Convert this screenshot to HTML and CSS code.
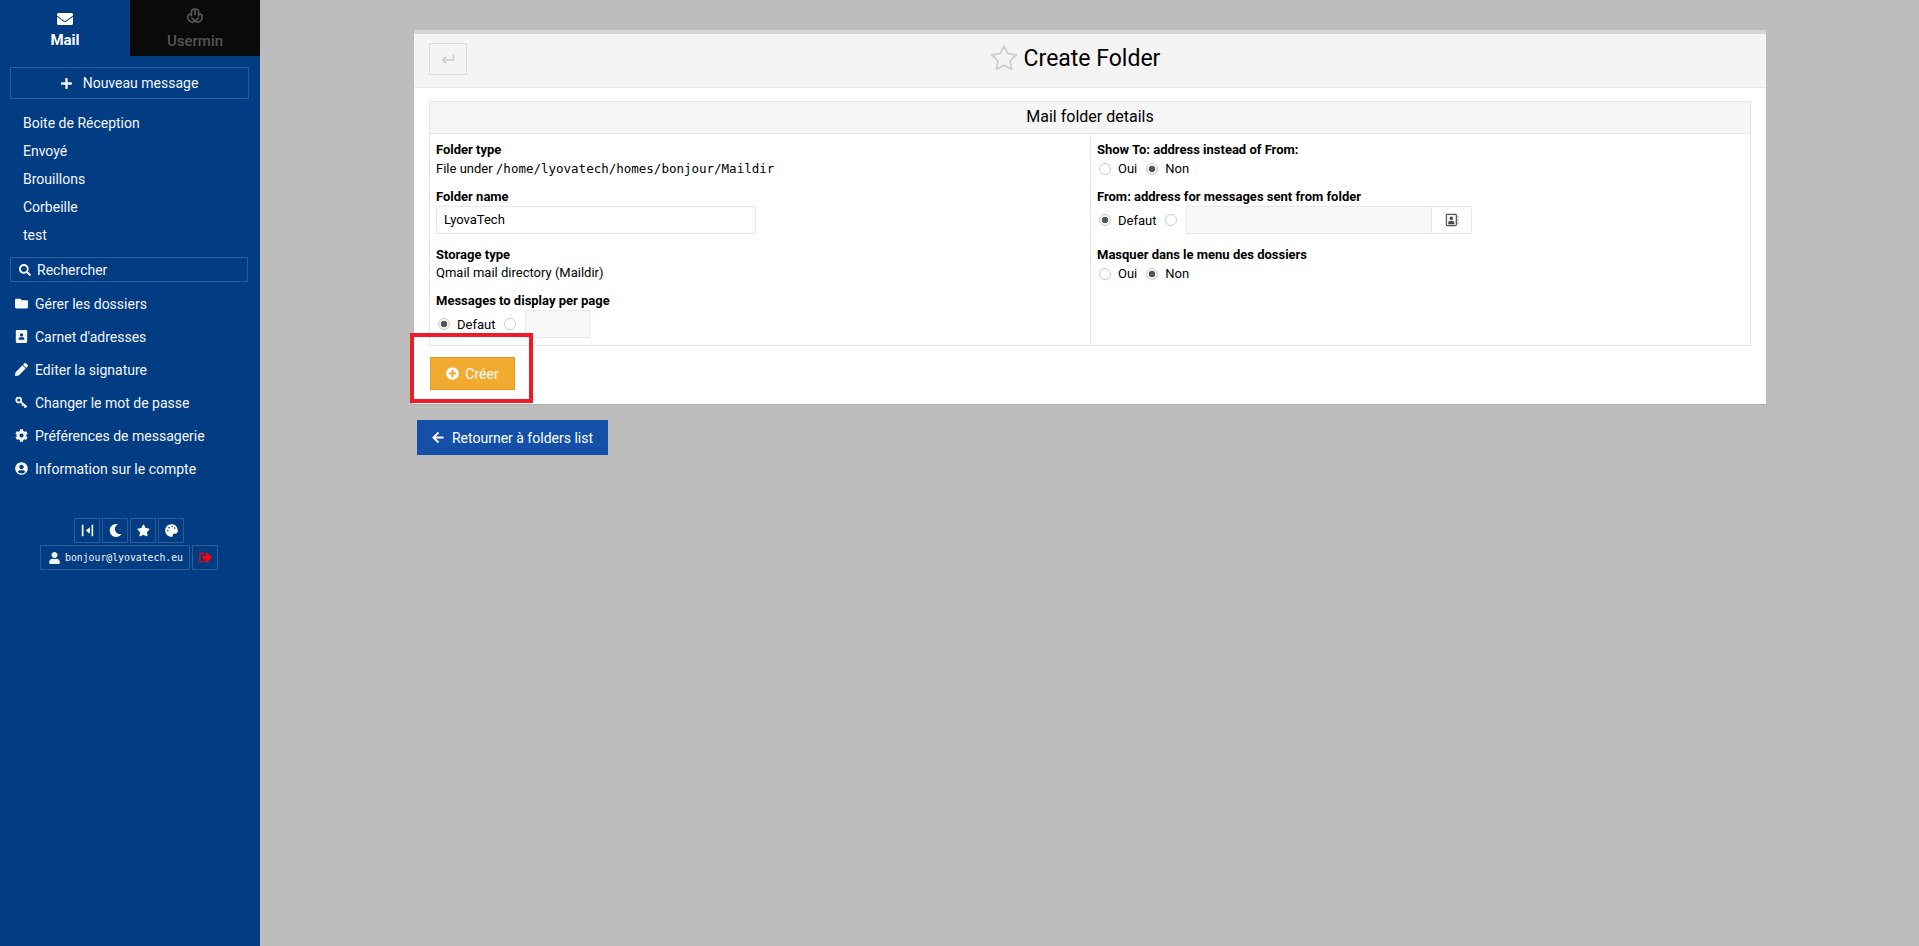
FILE: index.html
```html
<!DOCTYPE html>
<html lang="fr">
<head>
<meta charset="utf-8">
<title>Create Folder</title>
<link rel="stylesheet" href="styles.css">
</head>
<body>
<svg class="sprite" xmlns="http://www.w3.org/2000/svg">
  <symbol id="i-envelope" viewBox="0 0 512 512"><path d="M502.3 190.8c3.9-3.1 9.7-.2 9.7 4.7V400c0 26.5-21.5 48-48 48H48c-26.5 0-48-21.5-48-48V195.6c0-5 5.7-7.8 9.7-4.7 22.4 17.4 52.1 39.5 154.1 113.6 21.1 15.4 56.7 47.8 92.2 47.6 35.7.3 72-32.8 92.3-47.6 102-74.1 131.6-96.3 154-113.7zM256 320c23.2.4 56.6-29.2 73.4-41.4 132.7-96.3 142.8-104.7 173.4-128.7 5.8-4.5 9.2-11.5 9.2-18.9v-19c0-26.5-21.5-48-48-48H48C21.5 64 0 85.5 0 112v19c0 7.4 3.4 14.3 9.2 18.9 30.6 23.9 40.7 32.4 173.4 128.7 16.8 12.2 50.2 41.8 73.4 41.4z"/></symbol>
  <symbol id="i-plus" viewBox="0 0 448 512"><path d="M416 208H272V64c0-17.67-14.33-32-32-32h-32c-17.67 0-32 14.33-32 32v144H32c-17.67 0-32 14.33-32 32v32c0 17.67 14.33 32 32 32h144v144c0 17.67 14.33 32 32 32h32c17.67 0 32-14.33 32-32V304h144c17.67 0 32-14.33 32-32v-32c0-17.67-14.33-32-32-32z"/></symbol>
  <symbol id="i-search" viewBox="0 0 512 512"><path d="M505 442.7L405.3 343c-4.5-4.5-10.6-7-17-7H372c27.6-35.3 44-79.7 44-128C416 93.1 322.9 0 208 0S0 93.1 0 208s93.1 208 208 208c48.3 0 92.7-16.4 128-44v16.3c0 6.4 2.5 12.5 7 17l99.7 99.7c9.4 9.4 24.6 9.4 33.9 0l28.3-28.3c9.4-9.4 9.4-24.6.1-34zM208 336c-70.7 0-128-57.2-128-128 0-70.7 57.2-128 128-128 70.7 0 128 57.2 128 128 0 70.7-57.2 128-128 128z"/></symbol>
  <symbol id="i-folder" viewBox="0 0 512 512"><path d="M464 128H272l-64-64H48C21.49 64 0 85.49 0 112v288c0 26.51 21.49 48 48 48h416c26.51 0 48-21.49 48-48V176c0-26.51-21.49-48-48-48z"/></symbol>
  <symbol id="i-book" viewBox="0 0 448 512"><path fill-rule="evenodd" d="M48 0h352c26.500 0 48 21.500 48 48v416c0 26.500-21.500 48-48 48H48c-26.500 0-48-21.500-48-48V48C0 21.500 21.500 0 48 0zM224 128a64 64 0 1 0 0 128a64 64 0 1 0 0-128zM128 384h192c9 0 16-7 16-16v-20c0-34-34-60-72-60h-80c-38 0-72 26-72 60v20c0 9 7 16 16 16z"/></symbol>
  <symbol id="i-book-line" viewBox="0 0 16 16"><rect x="1.500" y="1.500" width="11.500" height="13" rx="1" fill="#f2f2f2" stroke="#5c5148" stroke-width="1.300"/><path fill="#4a4a4a" d="M7.200 4a2 2 0 1 1 0 4a2 2 0 0 1 0-4zM3.700 12.800v-1.800c0-1.400 1.500-2.200 3.500-2.200s3.500.8 3.500 2.200v1.800z"/><path fill="#8ab4ec" d="M14 3h1.500v2.500H14zM14 6.800h1.500v2.500H14zM14 10.500h1.500V13H14z"/></symbol>
  <symbol id="i-pencil" viewBox="0 0 512 512"><path d="M497.9 142.1l-46.1 46.1c-4.7 4.7-12.3 4.7-17 0l-111-111c-4.7-4.7-4.7-12.3 0-17l46.1-46.1c18.7-18.7 49.1-18.7 67.9 0l60.1 60.1c18.800 18.700 18.800 49.100 0 67.900zM284.200 99.800L21.600 362.400.4 483.900c-2.900 16.400 11.400 30.600 27.800 27.800l121.500-21.300 262.600-262.600c4.700-4.700 4.700-12.300 0-17l-111-111c-4.800-4.700-12.400-4.700-17.100 0z"/></symbol>
  <symbol id="i-key" viewBox="0 0 16 16"><g fill="none" stroke="currentColor" stroke-width="2.200"><circle cx="4.600" cy="5" r="3"/><path d="M7 7.200l7.500 6.300M10.300 10l-1.600 2M13 12.300l-1.500 2"/></g></symbol>
  <symbol id="i-cog" viewBox="0 0 512 512"><path d="M487.400 315.700l-42.600-24.600c4.300-23.200 4.300-47 0-70.200l42.600-24.600c4.900-2.800 7.100-8.600 5.500-14-11.100-35.600-30-67.800-54.700-94.600-3.800-4.100-10-5.100-14.800-2.300L380.800 110c-17.900-15.400-38.500-27.300-60.800-35.100V25.800c0-5.600-3.900-10.500-9.400-11.700-36.700-8.200-74.300-7.800-109.200 0-5.500 1.200-9.400 6.100-9.400 11.700V75c-22.200 7.900-42.800 19.800-60.800 35.100L88.700 85.500c-4.900-2.800-11-1.900-14.800 2.300-24.700 26.700-43.600 58.900-54.700 94.600-1.700 5.400.6 11.200 5.500 14L67.300 221c-4.300 23.200-4.300 47 0 70.200l-42.600 24.600c-4.900 2.800-7.100 8.600-5.500 14 11.100 35.600 30 67.800 54.700 94.600 3.800 4.100 10 5.100 14.800 2.300l42.600-24.600c17.900 15.400 38.500 27.300 60.800 35.100v49.200c0 5.600 3.900 10.500 9.400 11.700 36.700 8.200 74.300 7.800 109.200 0 5.500-1.200 9.400-6.100 9.400-11.700v-49.200c22.200-7.900 42.800-19.800 60.800-35.100l42.600 24.600c4.900 2.800 11 1.900 14.800-2.300 24.700-26.700 43.600-58.900 54.700-94.600 1.500-5.500-.7-11.300-5.600-14.100zM256 336c-44.100 0-80-35.900-80-80s35.900-80 80-80 80 35.900 80 80-35.900 80-80 80z"/></symbol>
  <symbol id="i-usercircle" viewBox="0 0 496 512"><path d="M248 8C111 8 0 119 0 256s111 248 248 248 248-111 248-248S385 8 248 8zm0 96c48.600 0 88 39.400 88 88s-39.400 88-88 88-88-39.400-88-88 39.400-88 88-88zm0 344c-58.700 0-111.300-26.600-146.500-68.200 18.800-35.400 55.600-59.800 98.500-59.800 2.400 0 4.800.4 7.100 1.100 13 4.200 26.600 6.900 40.900 6.900 14.300 0 28-2.700 40.900-6.900 2.300-.7 4.700-1.100 7.100-1.100 42.900 0 79.700 24.400 98.500 59.800C359.300 421.400 306.700 448 248 448z"/></symbol>
  <symbol id="i-collapse" viewBox="0 0 16 16"><path d="M1 1h2v14H1zM13 1h2v14h-2zM11 4v8L6 8z"/></symbol>
  <symbol id="i-moon" viewBox="0 0 512 512"><path d="M283.211 512c78.962 0 151.079-35.925 198.857-94.792 7.068-8.708-.639-21.430-11.562-19.350-124.203 23.654-238.262-71.576-238.262-196.954 0-72.222 38.662-138.635 101.498-174.394 9.686-5.512 7.250-20.197-3.756-22.230A258.156 258.156 0 0 0 283.211 0c-141.309 0-256 114.511-256 256 0 141.309 114.511 256 256 256z"/></symbol>
  <symbol id="i-star" viewBox="0 0 576 512"><path d="M259.300 17.800L194 150.200 47.900 171.500c-26.200 3.800-36.700 36.100-17.700 54.600l105.700 103-25 145.500c-4.500 26.300 23.200 46 46.400 33.700L288 439.600l130.700 68.700c23.200 12.200 50.900-7.400 46.400-33.700l-25-145.500 105.700-103c19-18.500 8.500-50.800-17.700-54.600L382 150.200 316.700 17.800c-11.700-23.600-45.600-23.900-57.400 0z"/></symbol>
  <symbol id="i-palette" viewBox="0 0 512 512"><path fill-rule="evenodd" d="M256 8C119 8 8 119 8 256s111 248 248 248c40 0 64-30 52-64-10-30 6-56 40-56h50c62 0 106-50 106-112C504 110 393 8 256 8zM112 296a32 32 0 1 0 0-64a32 32 0 0 0 0 64zM160 176a32 32 0 1 0 0-64a32 32 0 0 0 0 64zM288 128a32 32 0 1 0 0-64a32 32 0 0 0 0 64zM384 192a32 32 0 1 0 0-64a32 32 0 0 0 0 64z"/></symbol>
  <symbol id="i-user" viewBox="0 0 448 512"><path d="M224 256c70.700 0 128-57.300 128-128S294.700 0 224 0 96 57.300 96 128s57.300 128 128 128zm89.600 32h-16.700c-22.200 10.200-46.900 16-72.900 16s-50.600-5.800-72.900-16h-16.700C60.200 288 0 348.200 0 422.400V464c0 26.500 21.500 48 48 48h352c26.500 0 48-21.500 48-48v-41.600c0-74.200-60.200-134.400-134.400-134.400z"/></symbol>
  <symbol id="i-logout" viewBox="0 0 16 16"><path d="M8 2h2.500L15.800 8l-5.300 6H8v-3.500H4.500v-5H8z"/><path fill="none" stroke="currentColor" stroke-width="1.700" d="M6 2.600H2.500a1.400 1.400 0 0 0-1.400 1.400v8a1.400 1.400 0 0 0 1.400 1.400H6"/></symbol>
  <symbol id="i-left" viewBox="0 0 448 512"><path d="M257.500 445.100l-22.200 22.200c-9.400 9.400-24.600 9.400-33.900 0L7 273c-9.400-9.400-9.400-24.600 0-33.900L201.400 44.700c9.400-9.400 24.600-9.400 33.900 0l22.200 22.200c9.500 9.500 9.300 25-.4 34.300L136.600 216H424c13.300 0 24 10.700 24 24v32c0 13.300-10.700 24-24 24H136.600l120.500 114.800c9.800 9.300 10 24.800.4 34.300z"/></symbol>
  <symbol id="i-pluscircle" viewBox="0 0 512 512"><path d="M256 8C119 8 8 119 8 256s111 248 248 248 248-111 248-248S393 8 256 8zm144 276c0 6.600-5.400 12-12 12h-92v92c0 6.600-5.400 12-12 12h-56c-6.600 0-12-5.400-12-12v-92h-92c-6.600 0-12-5.400-12-12v-56c0-6.600 5.400-12 12-12h92v-92c0-6.600 5.400-12 12-12h56c6.600 0 12 5.400 12 12v92h92c6.600 0 12 5.400 12 12v56z"/></symbol>
</svg>

<aside class="sidebar">
  <div class="tabs">
    <a class="tab tab-on">
      <svg class="tab-icon"><use href="#i-envelope"/></svg>
      <span>Mail</span>
    </a>
    <a class="tab tab-off">
      <svg class="tab-icon tab-icon-um" viewBox="0 0 20 20">
        <path d="M6 10.500V5a3 3 0 0 1 4-2.500A3 3 0 0 1 14 5v5.500M10 2.500V9"/>
        <path d="M6 7.500c-2.500 0-4.500 2-4 4.500.4 2 1.500 3.500 3.500 4.500 2 .8 3.500 0 4.500-1 1 1 2.500 1.800 4.500 1 2-1 3.100-2.500 3.500-4.500.5-2.500-1.500-4.500-4-4.500M10 15.500L6 12M10 15.500L14 12"/>
      </svg>
      <span>Usermin</span>
    </a>
  </div>

  <a class="compose"><svg class="ic-plus"><use href="#i-plus"/></svg><span>Nouveau message</span></a>

  <nav class="folders">
    <a>Boite de Réception</a>
    <a>Envoyé</a>
    <a>Brouillons</a>
    <a>Corbeille</a>
    <a>test</a>
  </nav>

  <div class="search"><svg class="ic-search"><use href="#i-search"/></svg><span>Rechercher</span></div>

  <nav class="menu">
    <a><svg><use href="#i-folder"/></svg><span>Gérer les dossiers</span></a>
    <a><svg><use href="#i-book"/></svg><span>Carnet d'adresses</span></a>
    <a><svg><use href="#i-pencil"/></svg><span>Editer la signature</span></a>
    <a><svg><use href="#i-key"/></svg><span>Changer le mot de passe</span></a>
    <a><svg><use href="#i-cog"/></svg><span>Préférences de messagerie</span></a>
    <a><svg><use href="#i-usercircle"/></svg><span>Information sur le compte</span></a>
  </nav>

  <div class="tools">
    <div class="tool-row">
      <a class="tool"><svg><use href="#i-collapse"/></svg></a>
      <a class="tool"><svg><use href="#i-moon"/></svg></a>
      <a class="tool"><svg><use href="#i-star"/></svg></a>
      <a class="tool"><svg><use href="#i-palette"/></svg></a>
    </div>
    <div class="tool-row">
      <a class="tool tool-user"><svg><use href="#i-user"/></svg><span>bonjour@lyovatech.eu</span></a>
      <a class="tool tool-logout"><svg><use href="#i-logout"/></svg></a>
    </div>
  </div>
</aside>

<main class="main">
  <section class="panel">
    <header class="panel-head">
      <a class="back-small">
        <svg viewBox="0 0 16 16"><path d="M13.500 3.500v5.500H3M6 5.800L2.800 9 6 12.200"/></svg>
      </a>
      <h1 class="title">
        <svg class="title-star" viewBox="0 0 576 512"><path d="M288 30l78 158 174 25-126 123 30 173-156-82-156 82 30-173L36 213l174-25z"/></svg>
        <span>Create Folder</span>
      </h1>
    </header>

    <div class="panel-body">
      <div class="details">
        <div class="details-head">Mail folder details</div>
        <div class="details-grid">
          <div class="col col-left">
            <div class="field">
              <b>Folder type</b>
              <div class="value">File under <code>/home/lyovatech/homes/bonjour/Maildir</code></div>
            </div>
            <div class="field f-name">
              <b>Folder name</b>
              <div class="input input-name">LyovaTech</div>
            </div>
            <div class="field f-storage">
              <b>Storage type</b>
              <div class="value value-tight">Qmail mail directory (Maildir)</div>
            </div>
            <div class="field f-per">
              <b>Messages to display per page</b>
              <div class="radios">
                <i class="radio radio-on"></i><span>Defaut</span><i class="radio"></i>
                <div class="input input-num"></div>
              </div>
            </div>
          </div>
          <div class="col col-right">
            <div class="field">
              <b>Show To: address instead of From:</b>
              <div class="radios">
                <i class="radio"></i><span>Oui</span><i class="radio radio-on"></i><span>Non</span>
              </div>
            </div>
            <div class="field f-name">
              <b>From: address for messages sent from folder</b>
              <div class="radios">
                <i class="radio radio-on"></i><span>Defaut</span><i class="radio"></i>
                <div class="input input-from"></div>
                <a class="book-btn"><svg><use href="#i-book-line"/></svg></a>
              </div>
            </div>
            <div class="field f-storage">
              <b>Masquer dans le menu des dossiers</b>
              <div class="radios">
                <i class="radio"></i><span>Oui</span><i class="radio radio-on"></i><span>Non</span>
              </div>
            </div>
          </div>
        </div>
      </div>

      <div class="actions">
        <a class="btn-create"><svg><use href="#i-pluscircle"/></svg><span>Créer</span></a>
        <div class="highlight"></div>
      </div>
    </div>
  </section>

  <a class="btn-return"><svg><use href="#i-left"/></svg><span>Retourner à folders list</span></a>
</main>
</body>
</html>
```

FILE: styles.css
```css
* { box-sizing: border-box; }
html, body { height: 100%; }
body {
  margin: 0;
  display: flex;
  height: 946px;
  overflow: hidden;
  background: #bdbdbd;
  color: #000;
  font-family: Roboto, "Liberation Sans", sans-serif;
  font-size: 13px;
}
.sprite { display: none; }
svg { fill: currentColor; display: block; }

/* sidebar */
.sidebar {
  width: 260px;
  flex: none;
  background: #023c82;
  color: #f4f6fa;
  font-size: 14px;
}
.tabs { display: flex; height: 56px; }
.tab {
  width: 130px;
  display: flex;
  flex-direction: column;
  align-items: center;
  padding-top: 11px;
  font-size: 15px;
}
.tab-on { color: #fff; font-weight: 700; }
.tab-off { background: #0a0a0a; color: #555; font-weight: 500; }
.tab-icon { width: 16px; height: 16px; margin-bottom: 4px; }
.tab-off .tab-icon { margin-top: -4px; margin-bottom: 7px; width: 18px; height: 18px; }
.tab-icon-um { fill: none; stroke: currentColor; stroke-width: 1.9; }

.compose {
  margin: 11px 0 0 10px;
  width: 239px;
  height: 32px;
  border: 1px solid #2c5c97;
  display: flex;
  align-items: center;
  justify-content: center;
}
.ic-plus { width: 11px; height: 13px; margin-right: 11px; }

.folders { display: flex; flex-direction: column; margin-top: 10px; padding-left: 23px; }
.folders a { height: 28px; line-height: 28px; }

.search {
  margin: 8px 0 0 10px;
  width: 238px;
  height: 25px;
  border: 1px solid #2c5c97;
  display: flex;
  align-items: center;
  padding-left: 8px;
}
.ic-search { width: 12px; height: 12px; margin-right: 6px; }

.menu { display: flex; flex-direction: column; margin-top: 5px; padding-left: 15px; }
.menu a { height: 33px; display: flex; align-items: center; }
.menu svg { width: 13px; height: 13px; margin-right: 7px; flex: none; }

.tools { margin-top: 33px; display: flex; flex-direction: column; gap: 2px; align-items: center; padding-right: 2px; }
.tool-row { display: flex; gap: 2px; }
.tool {
  width: 26px;
  height: 25px;
  border: 1px solid #2c5c97;
  display: flex;
  align-items: center;
  justify-content: center;
  color: #fff;
}
.tool svg { width: 13px; height: 13px; }
.tool-user {
  width: 150px;
  padding-left: 2px;
  font-family: "DejaVu Sans Mono", monospace;
  font-size: 9.8px;
  color: #f4f6fa;
}
.tool-user svg { width: 11px; height: 12px; margin-right: 5px; }
.tool-logout { color: #f00; }

/* main */
.main { flex: 1; padding: 30px 0 0 154px; }
.panel {
  width: 1352px;
  height: 374px;
  background: #fff;
  border-top: 4px solid #d6d6d6;
  box-shadow: 0 1px 1px rgba(0, 0, 0, .08);
}
.panel-head {
  height: 54px;
  background: #f4f4f4;
  border-bottom: 1px solid #e8e8e8;
  display: flex;
  align-items: center;
  padding-left: 15px;
}
.back-small {
  width: 38px;
  height: 32px;
  margin-bottom: 3px;
  border: 1px solid #ddd;
  display: flex;
  align-items: center;
  justify-content: center;
}
.back-small svg { width: 16px; height: 16px; fill: none; stroke: #ccc; stroke-width: 1.6; }
.title {
  flex: 1;
  margin: 0 0 5px;
  padding-right: 83px;
  display: flex;
  align-items: center;
  justify-content: center;
  font-size: 23px;
  font-weight: 400;
}
.title-star {
  width: 28px;
  height: 26px;
  margin: -3px 6px 0 0;
  fill: none;
  stroke: #ccc;
  stroke-width: 36;
  stroke-linejoin: round;
}

.panel-body { padding: 13px 15px 0; }
.details { border: 1px solid #e6e6e6; height: 245px; }
.details-head {
  height: 32px;
  line-height: 30px;
  background: #f6f6f6;
  border-bottom: 1px solid #e6e6e6;
  text-align: center;
  font-size: 16px;
}
.details-grid { display: grid; grid-template-columns: 661px 1fr; height: 211px; }
.col { padding: 7px 6px 0; }
.col-left { border-right: 1px solid #e6e6e6; }
.field b { display: block; font-weight: 700; line-height: 18px; }
.value { line-height: 19px; }
.value-tight { line-height: 17px; }
.f-name { margin-top: 10px; }
.f-storage { margin-top: 12px; }
.f-per { margin-top: 11px; }
code { font-family: "DejaVu Sans Mono", monospace; font-size: 12.5px; }

.input { border: 1px solid #e8e8e8; background: #fff; height: 28px; }
.input-name { width: 320px; line-height: 26px; padding-left: 7px; }
.input-num { width: 65px; background: #f8f8f8; margin-left: 9px; }
.input-from { width: 246px; background: #f8f8f8; margin-left: 9px; }
.book-btn {
  width: 40px;
  height: 28px;
  border: 1px solid #e8e8e8;
  border-left: 0;
  display: flex;
  align-items: center;
  justify-content: center;
}
.book-btn svg { width: 14px; height: 14px; }

.radios { display: flex; align-items: center; min-height: 19px; padding-left: 2px; }
.radios span { margin-left: 7px; margin-right: 9px; }
.radio {
  width: 12px;
  height: 12px;
  border: 1px solid #ccc;
  border-radius: 50%;
  background: #fff;
  flex: none;
}
.radio-on { background: radial-gradient(circle, #555 0 3px, #f2f2f2 3.5px); }

.actions { position: relative; padding-top: 11px; }
.btn-create {
  width: 85px;
  height: 33px;
  margin-left: 1px;
  background: #f3ab2f;
  border: 1px solid #dc9a26;
  color: #fff;
  font-size: 14px;
  display: flex;
  align-items: center;
  justify-content: center;
}
.btn-create svg { width: 13px; height: 13px; margin-right: 6px; }
.highlight {
  position: absolute;
  left: -19px;
  top: -13px;
  width: 123px;
  height: 70px;
  border: 4px solid #ed1c24;
}

.btn-return {
  margin: 16px 0 0 3px;
  width: 191px;
  height: 35px;
  background: #1450a8;
  color: #fff;
  font-size: 14px;
  display: flex;
  align-items: center;
  justify-content: center;
}
.btn-return svg { width: 12px; height: 13px; margin-right: 8px; }
```
